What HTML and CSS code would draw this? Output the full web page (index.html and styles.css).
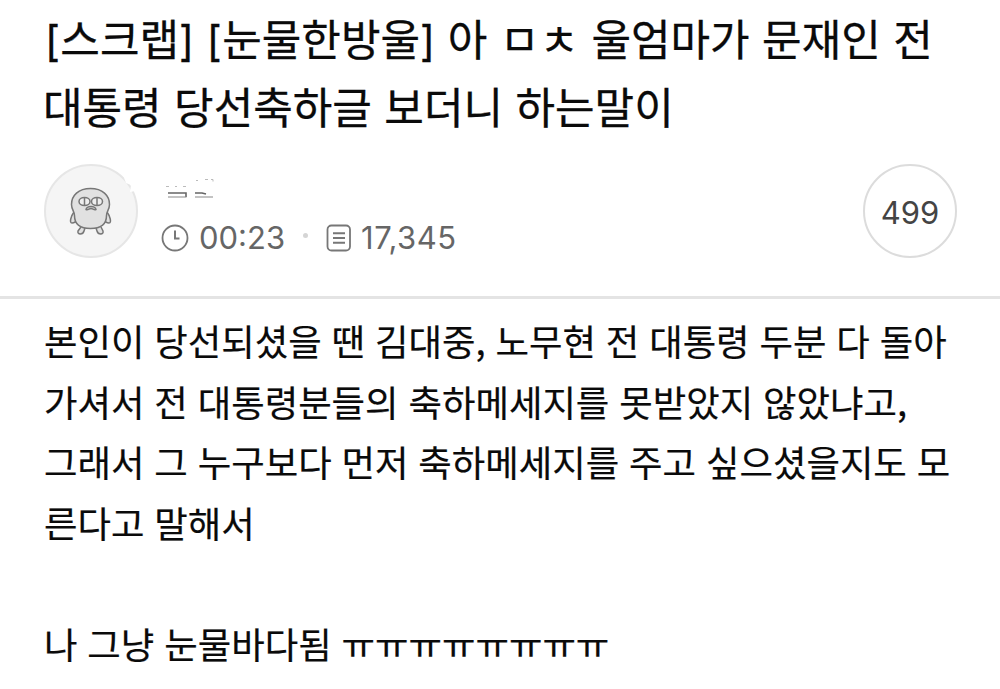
FILE: index.html
```
<!DOCTYPE html>
<html lang="ko">
<head>
    <meta charset="UTF-8">
    <meta name="viewport" content="width=device-width, initial-scale=1.0">
    <title>[스크랩] [눈물한방울]</title>
    <link rel="stylesheet" href="styles.css">
</head>
<body>

<header class="post-header">
    <h1 class="post-title"><span class="bracket">[</span>스크랩<span class="bracket">]</span> <span class="bracket">[</span>눈물한방울<span class="bracket">]</span> 아 ㅁㅊ 울엄마가 문재인 전<br>대통령 당선축하글 보더니 하는말이</h1>
    <div class="post-info">
        <svg class="avatar" viewBox="0 0 94 94">
            <circle cx="47" cy="47" r="46" fill="#f5f5f5" stroke="#e6e6e6" stroke-width="2"/>
            <path d="M79 11l3 8 5 2-1 7 10-2V8z" fill="#fff"/>
            <g fill="#e1e1e1" stroke="#777" stroke-width="1.5" stroke-linejoin="round">
                <path d="M37 63l-3 4c-1 4 5 4 6 0l1-3M52 64l1 3c1 4 7 4 6 0l-2-4"/>
                <path d="M30 48c-3 4-5 11-2 11 2 0 4-1 6-4M63 48c3 4 5 11 2 11-2 0-4-1-6-4"/>
                <path d="M46.500 24.500c-12 0-19 7-19 16 0 5 3 7 3 11 0 9 6 13 16 13s16-4 16-13c0-4 3-6 3-11 0-9-7-16-19-16z"/>
                <ellipse cx="40.500" cy="37.500" rx="5.500" ry="4" fill="#eee"/>
                <ellipse cx="53" cy="37.500" rx="5.500" ry="4" fill="#eee"/>
                <path d="M40.500 34v7M53 34v7"/>
                <path d="M42 45.500c1-4 9-4 10 0-2 1-3-1-5-1s-3 2-5 1z"/>
            </g>
        </svg>
        <div class="writer">
            <!-- nickname, mostly rubbed out -->
            <svg class="nickname" viewBox="0 0 56 26" fill="none">
                <path d="M2 18h18v4M29 18h7l4 1" stroke="#666" stroke-width="1.600"/>
                <path d="M2 22h18.500M29 22h18" stroke="#888" stroke-width="1.200"/>
                <path d="M0 11.500h3M9 11.500h2M17 11.500h3M30 5.500h2M39 4.500h3M45 4.500h2v2" stroke="#bbb" stroke-width="1"/>
            </svg>
            <div class="meta">
                <svg class="icon-clock" viewBox="0 0 28 28" fill="none" stroke="#777">
                    <circle cx="14" cy="14" r="12.500" stroke-width="1.800"/>
                    <path d="M14 6.500v8h4.500" stroke-width="2"/>
                </svg>
                <span class="time">00:23</span>
                <span class="dot"></span>
                <svg class="icon-views" viewBox="0 0 26 28" fill="none" stroke="#777">
                    <rect x="1.500" y="1.500" width="22.500" height="25" rx="4" stroke-width="1.800"/>
                    <path d="M7 9.200h12M7 14h12M7 18.800h12" stroke-width="1.900"/>
                </svg>
                <span class="views">17,345</span>
            </div>
        </div>
        <div class="comment-count">499</div>
    </div>
</header>

<div class="post-content">
    <p>본인이 당선되셨을 땐 김대중, 노무현 전 대통령 두분 다 돌아<br>가셔서 전 대통령분들의 축하메세지를 못받았지 않았냐고,<br>그래서 그 누구보다 먼저 축하메세지를 주고 싶으셨을지도 모<br>른다고 말해서</p>
    <p>나 그냥 눈물바다됨 ㅠㅠㅠㅠㅠㅠㅠㅠ</p>
</div>

</body>
</html>
```
FILE: styles.css
```
body {
    margin: 0;
    padding: 0;
    background-color: #fff;
    color: #0a0a0a;
    font-family: "Noto Sans CJK KR", sans-serif;
}

.post-header {
    box-sizing: border-box;
    height: 299px;
    padding: 3px 43px 0;
    border-bottom: 3px solid #e4e4e4;
}

.post-title {
    margin: 0;
    font-size: 43px;
    font-weight: 400;
    line-height: 68px;
    text-indent: 2px;
    word-spacing: 0.4px;
    white-space: nowrap;
    -webkit-text-stroke: 0.3px #0a0a0a;
}

.bracket {
    font-family: Inter, sans-serif;
    font-size: 41px;
    line-height: 1;
    letter-spacing: 0.4px;
}

.post-info {
    display: flex;
    align-items: flex-start;
    padding-top: 25px;
}

.avatar {
    width: 94px;
    height: 94px;
    margin-left: 1px;
}

.writer {
    flex: 1;
    padding: 11px 0 0 23px;
}

.nickname {
    display: block;
    width: 56px;
    height: 26px;
    margin-left: 5px;
}

.meta {
    display: flex;
    align-items: center;
    height: 40px;
    margin-top: 16px;
    padding-top: 1px;
    color: #666;
    font-family: Inter, sans-serif;
    font-size: 31px;
    line-height: 40px;
}

.icon-clock {
    width: 28px;
    height: 28px;
}

.time {
    margin-left: 10px;
}

.dot {
    width: 5px;
    height: 5px;
    margin: 0 18px 6px 18px;
    border-radius: 50%;
    background-color: #d5d5d5;
}

.icon-views {
    width: 26px;
    height: 28px;
}

.views {
    margin-left: 9px;
    letter-spacing: 0.5px;
}

.comment-count {
    box-sizing: border-box;
    width: 94px;
    height: 94px;
    border: 2px solid #dcdcdc;
    border-radius: 50%;
    color: #444;
    font-family: Inter, sans-serif;
    font-size: 31px;
    line-height: 94px;
    text-align: center;
}

.post-content {
    padding: 11px 44px 0;
    font-size: 36.4px;
    line-height: 60.5px;
    word-spacing: -0.3px;
    white-space: nowrap;
    -webkit-text-stroke: 0.2px #0a0a0a;
}

.post-content p {
    margin: 0 0 60.5px;
}

.post-content p:last-child {
    margin-bottom: 0;
}
```
